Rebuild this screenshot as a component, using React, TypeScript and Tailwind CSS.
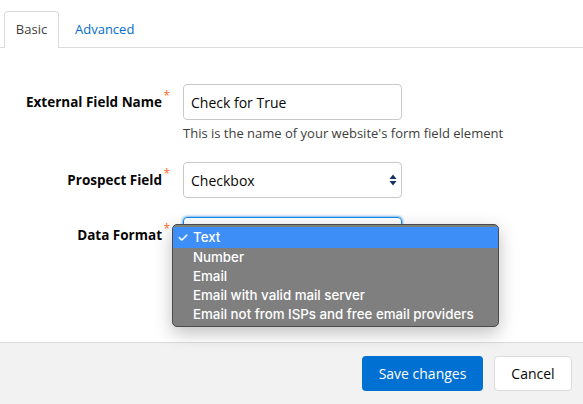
import { useState } from "react"

const options = [
  "Text",
  "Number",
  "Email",
  "Email with valid mail server",
  "Email not from ISPs and free email providers",
]

function Label({ text }: { text: string }) {
  return (
    <div className="flex justify-end">
      <span className="relative text-[13.5px] font-bold text-[#080707] pr-[8px]">
        {text}
        <span className="absolute right-0 -top-[5px] text-[12px] text-[#ff6c2c] font-normal">*</span>
      </span>
    </div>
  )
}

export default function App() {
  const [tab, setTab] = useState("basic")

  return (
    <div
      className="w-[583px] h-[404px] bg-white flex flex-col overflow-hidden"
      style={{ fontFamily: '"Open Sans", "Noto Sans", sans-serif' }}
    >
      {/* Tabs */}
      <div className="pt-[11px] pl-[4px] flex border-b border-[#dddbda] h-[48px]">
        <button
          onClick={() => setTab("basic")}
          className="w-[55px] h-[37px] border border-[#dddbda] border-b-0 rounded-t-[4px] bg-white text-[13px] text-[#3e3e3c] -mb-[1px] relative"
        >
          Basic
        </button>
        <button
          onClick={() => setTab("advanced")}
          className="px-[16px] h-[37px] text-[13px] text-[#006dcc]"
        >
          Advanced
        </button>
      </div>

      {/* Form */}
      <div className="flex-1 relative">
        <div className="grid grid-cols-[170px_219px] gap-x-[13px] items-center pt-[36px]">
          <Label text="External Field Name" />
          <div className="h-[36px] border border-[#c9c9c9] rounded-[4px] flex items-center px-[7px] text-[14px] text-[#080707]">
            Check for True
          </div>
          <div />
          <div className="text-[13px] text-[#3e3e3c] whitespace-nowrap mt-[4px] leading-[18px]">
            This is the name of your website's form field element
          </div>

          <div className="h-[20px] col-span-2" />

          <Label text="Prospect Field" />
          <div className="h-[36px] border border-[#c9c9c9] rounded-[4px] flex items-center justify-between pl-[7px] pr-[4px] text-[14px] text-[#080707]">
            Checkbox
            <svg width="8" height="12" viewBox="0 0 8 12">
              <path d="M4 0.5 L7.5 5 L0.5 5 Z" fill="#16325c" />
              <path d="M4 11.5 L7.5 7 L0.5 7 Z" fill="#16325c" />
            </svg>
          </div>

          <div className="h-[19px] col-span-2" />

          <Label text="Data Format" />
          <div className="h-[36px] border border-[#1589ee] rounded-[4px] shadow-[0_0_3px_#0070d2]" />
        </div>

        {/* Native menu */}
        <div
          className="absolute left-[172px] top-[176px] w-[327px] rounded-[5px] border border-[#4b4b4b] bg-[#7f7f7f] py-[2px] shadow-[0_6px_18px_rgba(0,0,0,0.25)] text-white text-[13.3px] font-medium"
          style={{ fontFamily: 'Inter, "Liberation Sans", sans-serif' }}
        >
          {options.map((o, i) => (
            <div
              key={o}
              className={
                i === 0
                  ? "h-[21px] bg-[#3d8ff7] flex items-center pl-[4px]"
                  : "h-[19px] flex items-center pl-[4px]"
              }
            >
              <span className="w-[16px] shrink-0 text-[13px]">{i === 0 ? "✓" : ""}</span>
              <span>{o}</span>
            </div>
          ))}
        </div>
      </div>

      {/* Footer */}
      <div className="h-[62px] border-t border-[#dddbda] bg-[#f3f2f2] flex items-center justify-end gap-[11px] pr-[11px]">
        <button className="w-[121px] h-[35px] rounded-[4px] bg-[#0070d2] text-white text-[14px]">
          Save changes
        </button>
        <button className="w-[78px] h-[35px] rounded-[4px] border border-[#dddbda] bg-white text-[14px] text-[#080707]">
          Cancel
        </button>
      </div>
    </div>
  )
}
